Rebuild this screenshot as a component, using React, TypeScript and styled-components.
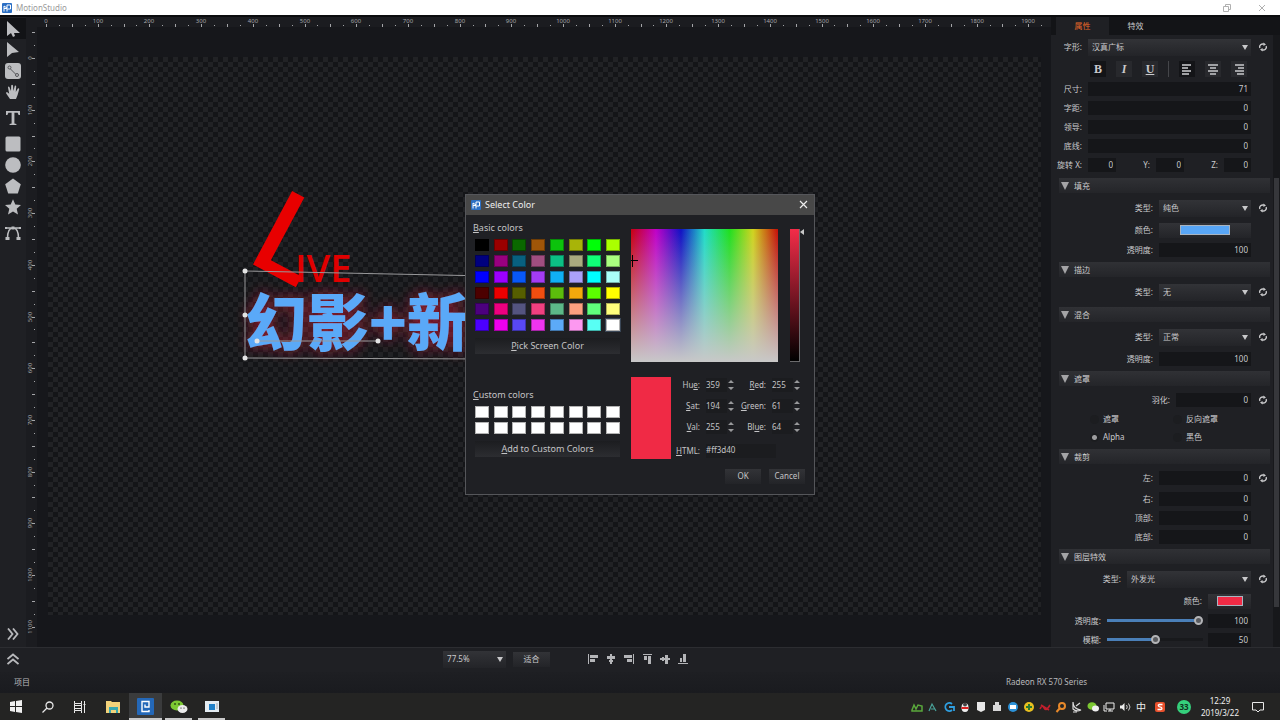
import React from "react";
import styled, { createGlobalStyle, css } from "styled-components";

const GlobalStyle = createGlobalStyle`
  * { box-sizing: border-box; }
  body {
    margin: 0;
    background: #17181c;
    color: #cacacc;
    font-family: "Noto Sans", "Noto Sans CJK SC", sans-serif;
    font-size: 8px;
    line-height: 12px;
  }
  button, input, select { font: inherit; color: inherit; margin: 0; padding: 0; border: 0; }
  button { background: none; }
  svg { display: block; }
`;

/* ---------- shell ---------- */

const Shell = styled.div`
  display: flex;
  flex-direction: column;
  height: 100vh;
  overflow: hidden;
  position: relative;
`;

const TitleBar = styled.header`
  display: flex;
  flex: none;
  align-items: center;
  gap: 4px;
  height: 15px;
  padding: 0 10px 0 2px;
  background: #fff;
  color: #9a9a9a;
`;

const AppTitle = styled.h1`
  margin: 0;
  flex: 1;
  font-size: 8px;
  font-weight: 400;
`;

const WindowButton = styled.button`
  display: grid;
  place-items: center;
  width: 16px;
  height: 14px;
  margin-left: 15px;
`;

const Workspace = styled.div`
  display: flex;
  flex: 1;
  min-height: 0;
  border-top: 2px solid #0b0c0e;
`;

const ToolRail = styled.nav`
  display: flex;
  flex-direction: column;
  width: 26px;
  padding: 1px 0 2px;
  background: #1f2024;
`;

const ToolButton = styled.button<{ $active?: boolean; $gap?: boolean }>`
  display: grid;
  place-items: center;
  height: 21px;
  margin-top: ${(p) => (p.$gap ? 5 : 0)}px;
  background: ${(p) => (p.$active ? "#121316" : "transparent")};
`;

const RailSpacer = styled.div`
  flex: 1;
`;

const Stage = styled.main`
  flex: 1;
  min-width: 0;
  min-height: 0;
  display: grid;
  grid-template-columns: 11px 1fr;
  grid-template-rows: 10px 1fr;
`;

const RulerCorner = styled.div`
  background: #1b1c20;
`;

const RulerTrack = styled.div`
  background: #1b1c20;
  overflow: hidden;
  min-width: 0;
  min-height: 0;
`;

const Canvas = styled.div`
  display: flex;
  min-height: 0;
  padding: 30px 10px 32px 11px;
  background: #16171b;
`;

const Artboard = styled.div`
  flex: 1;
  position: relative;
  background: repeating-conic-gradient(#212225 0 25%, #141518 0 50%) 0 0 / 10px 10px;
`;

const Artwork = styled.svg`
  position: absolute;
  inset: 0;
  width: 100%;
  height: 100%;
`;

/* ---------- property panel ---------- */

const Panel = styled.aside`
  width: 229px;
  display: flex;
  flex-direction: column;
  background: #1f2024;
`;

const TabStrip = styled.div`
  display: flex;
  flex: none;
  height: 18px;
  padding-left: 5px;
  background: #131417;
`;

const Tab = styled.button<{ $active?: boolean }>`
  width: 53px;
  background: ${(p) => (p.$active ? "#1f2024" : "transparent")};
  color: ${(p) => (p.$active ? "#e8692a" : "#cacacc")};
`;

const PanelScroll = styled.div`
  display: flex;
  flex: 1;
  min-height: 0;
  overflow: hidden;
`;

const PanelBody = styled.div`
  flex: 1;
`;

const ScrollTrack = styled.div`
  width: 7px;
  padding-top: 143px;
  background: #17181b;
`;

const ScrollThumb = styled.div`
  width: 5px;
  height: 429px;
  margin-left: 1px;
  background: #36373b;
`;

const Row = styled.div<{ $h: number }>`
  display: flex;
  align-items: center;
  height: ${(p) => p.$h}px;
`;

const RowLabel = styled.label`
  flex: 1;
  text-align: right;
  padding-right: 6px;
  white-space: nowrap;
`;

const ResetCell = styled.div`
  width: 22px;
  display: grid;
  place-items: center;
  padding-left: 2px;
`;

const IconButton = styled.button`
  display: grid;
  place-items: center;
`;

const NumberField = styled.input<{ $w: number }>`
  width: ${(p) => p.$w}px;
  height: 14px;
  padding: 0 3px 1px;
  text-align: right;
  background: #151619;
`;

const raised = css`
  background: linear-gradient(#323337, #232428);
`;

const SelectWrap = styled.span<{ $w: number }>`
  display: grid;
  align-items: center;
  width: ${(p) => p.$w}px;
  height: 17px;
  ${raised}
  & > * { grid-area: 1 / 1; }
`;

const NativeSelect = styled.select`
  appearance: none;
  width: 100%;
  height: 100%;
  padding-left: 4px;
  background: transparent;
`;

const SelectArrow = styled.svg`
  justify-self: end;
  margin-right: 3px;
  pointer-events: none;
`;

const ColorButton = styled.button<{ $w: number }>`
  display: grid;
  place-items: center;
  width: ${(p) => p.$w}px;
  height: 15px;
  ${raised}
`;

const ColorChip = styled.span<{ $w: number; $c: string }>`
  width: ${(p) => p.$w}px;
  height: 10px;
  border: 1px solid #a9b4c0;
  background: ${(p) => p.$c};
`;

const FormatBar = styled.div`
  display: flex;
  align-items: center;
  gap: 10px;
  height: 20px;
  padding-left: 39px;
`;

const FormatButton = styled.button<{ $on?: boolean }>`
  display: grid;
  place-items: center;
  width: 16px;
  height: 16px;
  font-family: "Liberation Serif", serif;
  font-size: 12px;
  font-weight: 700;
  background: ${(p) => (p.$on ? "#131417" : "#28292d")};
`;

const FormatDivider = styled.span`
  width: 1px;
  height: 16px;
  background: #45464a;
`;

const SectionHeader = styled.button`
  display: flex;
  align-items: center;
  gap: 5px;
  width: 211px;
  height: 15px;
  margin: 3px 0 3px 8px;
  padding-left: 2px;
  background: linear-gradient(#303135, #242529);
`;

const AxisLabel = styled.label`
  width: 40px;
  padding-right: 6px;
  text-align: right;
`;

const ChoiceRow = styled.div`
  display: grid;
  grid-template-columns: 83px 1fr;
  align-items: center;
  height: 18px;
  padding-left: 39px;
`;

const Choice = styled.label`
  display: flex;
  align-items: center;
  gap: 4px;
`;

const Radio = styled.input`
  appearance: none;
  width: 9px;
  height: 9px;
  border-radius: 50%;
  background: #1c1d20;
  &:checked { background: radial-gradient(circle, #9c9c9e 0 2px, #1b1c1f 3px); }
`;

const Slider = styled.input<{ $fill: number }>`
  appearance: none;
  width: 96px;
  height: 10px;
  margin-right: 5px;
  background: linear-gradient(90deg, #4a7fb8 ${(p) => p.$fill}%, #18191c 0) center / 100% 3px no-repeat;
  &::-webkit-slider-thumb {
    appearance: none;
    width: 9px;
    height: 9px;
    border: 2px solid #b4b5b8;
    border-radius: 50%;
    background: #5a5b5f;
  }
`;

/* ---------- bottom bars ---------- */

const ViewBar = styled.div`
  display: grid;
  flex: none;
  grid-template-columns: 9fr 17fr;
  align-items: center;
  height: 25px;
  padding-bottom: 2px;
  border-top: 1px solid #2c2d31;
  background: #1f2024;
`;

const ViewControls = styled.div`
  display: flex;
  align-items: center;
`;

const ExpandButton = styled(IconButton)`
  width: 26px;
  height: 22px;
`;

const FitButton = styled.button`
  width: 37px;
  height: 15px;
  margin: 0 34px 0 7px;
  ${raised}
`;

const AlignButton = styled(IconButton)`
  width: 18px;
  height: 16px;
`;

const StatusBar = styled.footer`
  display: flex;
  flex: none;
  justify-content: space-between;
  align-items: center;
  height: 21px;
  padding: 0 193px 1px 14px;
  background: linear-gradient(#1e1f23, #1a1b1f);
  color: #b8b8bb;
`;

const Taskbar = styled.nav`
  display: flex;
  flex: none;
  align-items: stretch;
  height: 27px;
  background: #242423;
`;

const TaskButton = styled.button<{ $active?: boolean; $open?: boolean }>`
  display: grid;
  place-items: center;
  width: 33px;
  background: ${(p) => (p.$active ? "#3a3b3c" : "transparent")};
  position: relative;
  &:nth-child(-n + 3) { width: 32px; }
  &::after {
    content: "";
    display: ${(p) => (p.$open ? "block" : "none")};
    position: absolute;
    left: ${(p) => (p.$active ? 0 : 3)}px;
    right: ${(p) => (p.$active ? 0 : 3)}px;
    bottom: 0;
    height: 2px;
    background: #c9c9c9;
  }
`;

const TaskSpacer = styled.div`
  flex: 1;
`;

const TrayButton = styled.button<{ $wide?: boolean }>`
  display: grid;
  place-items: center;
  width: ${(p) => (p.$wide ? 22 : 16)}px;
  font-size: 10px;
  color: #eee;
`;

const TrayBadge = styled.button`
  align-self: center;
  width: 14px;
  height: 14px;
  margin: 0 6px;
  border-radius: 50%;
  background: #35d07c;
  color: #10331f;
  font-weight: 700;
`;

const Clock = styled.div`
  align-self: center;
  width: 46px;
  text-align: center;
  color: #f0f0f0;
`;

const NoticeButton = styled(IconButton)`
  width: 30px;
  margin-right: 7px;
`;

/* ---------- colour dialog ---------- */

const DialogLayer = styled.div`
  position: absolute;
  inset: 0;
  display: grid;
  place-items: center;
  padding-bottom: 32px;
  pointer-events: none;
`;

const Dialog = styled.section`
  width: 350px;
  border: 1px solid #55565a;
  background: #1f2024;
  color: #c4c4c6;
  pointer-events: auto;
`;

const DialogTitle = styled.header`
  display: flex;
  align-items: center;
  gap: 4px;
  height: 20px;
  padding: 0 6px 0 5px;
  background: #484848;
  color: #eee;
  h2 { margin: 0; flex: 1; font-size: 9px; font-weight: 400; }
`;

const DialogBody = styled.div`
  display: grid;
  grid-template-columns: 147px 1fr;
  column-gap: 11px;
  padding: 7px 9px 10px 7px;
`;

const Palette = styled.div`
  display: flex;
  flex-direction: column;
`;

const GroupLabel = styled.h3<{ $gap?: boolean }>`
  margin: ${(p) => (p.$gap ? 35 : 0)}px 0 5px;
  font-size: 9px;
  font-weight: 400;
  line-height: 12px;
`;

const SwatchGrid = styled.div`
  display: grid;
  grid-template-columns: repeat(8, 14px);
  justify-content: space-between;
  row-gap: 4px;
  margin-left: 2px;
`;

const Swatch = styled.button<{ $c: string; $selected?: boolean }>`
  height: 12px;
  background: ${(p) => p.$c};
  border: 1px solid rgba(0, 0, 0, 0.3);
  outline: ${(p) => (p.$selected ? "1px solid #3a4656" : "none")};
`;

const WideButton = styled.button`
  height: 16px;
  margin: 7px 0 0 2px;
  font-size: 9px;
  background: linear-gradient(#1c1d20, #2c2d31);
`;

const Picker = styled.div`
  padding-top: 7px;
`;

const FieldRow = styled.div`
  display: flex;
  height: 133px;
`;

const SpectrumField = styled.div`
  width: 147px;
  background:
    linear-gradient(rgba(200, 200, 200, 0), #c8c8c8),
    linear-gradient(90deg, #c80010, #c000c8 17%, #1010c4 34%, #20dcc8 50%, #1ee01e 67%, #d0d41e 83%, #c40c08);
`;

const ValueBar = styled.div`
  width: 10px;
  margin-left: 12px;
  border-right: 1px solid #6a6a6c;
  border-bottom: 1px solid #6a6a6c;
  background: linear-gradient(#f32c48, #000);
`;

const Details = styled.div`
  display: flex;
  gap: 4px;
  margin-top: 13px;
`;

const Preview = styled.div`
  width: 40px;
  height: 82px;
  margin-top: 2px;
  background: #f02a45;
`;

const Fields = styled.div`
  flex: 1;
`;

const FieldLine = styled.div<{ $tall?: boolean }>`
  display: flex;
  align-items: center;
  height: ${(p) => (p.$tall ? 26 : 21)}px;
`;

const FieldLabel = styled.label<{ $wide?: boolean }>`
  width: ${(p) => (p.$wide ? 31 : 25)}px;
  text-align: right;
  white-space: nowrap;
`;

const SpinInput = styled.input`
  width: 21px;
  height: 14px;
  margin-left: 6px;
  padding-bottom: 2px;
  background: #1b1c1f;
`;

const HexInput = styled.input`
  width: 70px;
  height: 14px;
  margin-left: 6px;
  padding-bottom: 2px;
  background: #1b1c1f;
`;

const DialogActions = styled.div`
  display: flex;
  justify-content: flex-end;
  gap: 8px;
  margin-top: 5px;
`;

const ActionButton = styled.button`
  width: 36px;
  height: 15px;
  ${raised}
`;

/* ---------- icons ---------- */

const LogoMark = () => (
  <svg width="10" height="10" viewBox="0 0 10 10">
    <rect width="10" height="10" rx="1" fill="#2b6fc4" />
    <path d="M2 8.500V3l3 2V2h3.500v4H5M2 5.500h3v3" fill="none" stroke="#fff" strokeWidth="1" />
  </svg>
);

const ResetIcon = () => (
  <svg width="10" height="10" viewBox="0 0 10 10">
    <path d="M1.800 6A3.200 3 0 0 1 6 2.200M8.200 4A3.200 3 0 0 1 4 7.800" fill="none" stroke="#c8c8ca" strokeWidth="1.400" />
    <path d="M5.400 .6 8 2.400 5.400 4zM4.600 9.400 2 7.600 4.600 6z" fill="#c8c8ca" />
  </svg>
);

const toolIcons: { name: string; gap?: boolean; active?: boolean; art: React.ReactNode }[] = [
  { name: "Select", active: true, art: <path d="M2 0v15l4-3 2 4 2-1-1-3h6z" /> },
  { name: "Direct select", art: <path d="M2 0v15l5-4 7-1z" /> },
  {
    name: "Path",
    art: (
      <>
        <rect x="0" y="0" width="16" height="16" rx="3" />
        <path d="M4 4.500l8 8" stroke="#55565a" fill="none" />
        <circle cx="4.500" cy="4.500" r="1.500" fill="#bcbdc0" stroke="#55565a" />
        <circle cx="12" cy="12" r="1.500" fill="#bcbdc0" stroke="#55565a" />
      </>
    ),
  },
  {
    name: "Hand",
    art: (
      <path d="M5 15 1.200 9.600Q.6 8 2 8l2.200 1.800L3 3.600Q3 2 4.400 3L6 7 6.200 1.600Q7 0 8 1.600L8.400 7l1.400-5.200Q11 .8 11.200 2.400L10.800 8l2-3.600q1.400-.8 1.400.8L12.600 11 11 15z" />
    ),
  },
  {
    name: "Text",
    gap: true,
    art: <path d="M1 1h14v4h-1.400L12.600 2.800H9.400V13.400l2 .6v1H4.600v-1l2-.6V2.800H3.400L2.400 5H1z" />,
  },
  { name: "Rectangle", gap: true, art: <rect x=".5" y=".5" width="15" height="15" rx="1.500" /> },
  { name: "Ellipse", art: <circle cx="8" cy="8" r="7.800" /> },
  { name: "Polygon", art: <path d="M8 .5 15.800 6.300 12.800 15.500H3.200L.2 6.300z" /> },
  { name: "Star", art: <path d="M8 .2l2.300 5.200 5.700.6-4.300 3.800 1.300 5.700L8 12.500 3 15.500l1.300-5.700L0 6l5.700-.6z" /> },
  {
    name: "Pen",
    gap: true,
    art: (
      <>
        <path d="M2.500 13.500C2.500 8 3 3 8 3s5.500 5 5.500 10.500M1 3h14" fill="none" stroke="#bcbdc0" strokeWidth="1.500" />
        <path d="M.5 12h4v3h-4zM11.500 12h4v3h-4zM6.500 1.500h3v3h-3zM0 2h2v2H0zM14 2h2v2h-2z" />
      </>
    ),
  },
];

const alignIcons = [
  { name: "Align left", d: "M1 1h1v10H1zM3 2h8v3H3zM3 6h5v3H3z" },
  { name: "Align centre", d: "M5 1h2v10H5zM2 3h8v3H2zM4 7h4v2H4z" },
  { name: "Align right", d: "M10 1h1v10h-1zM1 2h8v3H1zM4 6h5v3H4z" },
  { name: "Align top", d: "M2 1h9v1H2zM3 3h3v4H3zM7 3h3v8H7z" },
  { name: "Align middle", d: "M1 5h10v2H1zM3 4h2v4H3zM6 2h3v9H6z" },
  { name: "Align bottom", d: "M1 10h10v1H1zM3 5h2v4H3zM6 1h3v8H6z" },
];

/* ---------- rulers ---------- */

const STEP = 51.7;

function HorizontalRuler() {
  const ticks = Array.from({ length: 79 }, (_, i) => i);
  return (
    <svg width="100%" height="10" fill="#a4a5a8" fontSize="6">
      {ticks.map((i) => (
        <rect key={i} x={Math.round(9 + (i * STEP) / 4)} y={i % 2 ? 8 : 7} width="1" height={i % 2 ? 1 : 3} />
      ))}
      {Array.from({ length: 20 }, (_, i) => (
        <text key={i} x={Math.round(9 + i * STEP)} y="6" textAnchor="middle">{i * 100}</text>
      ))}
    </svg>
  );
}

function VerticalRuler() {
  const ticks = Array.from({ length: 47 }, (_, i) => i - 2);
  return (
    <svg width="11" height="100%" fill="#a4a5a8" fontSize="6">
      {ticks.map((i) => (
        <rect key={i} x={i % 2 ? 8 : 6} y={Math.round(31 + (i * STEP) / 4)} width={i % 2 ? 1 : 3} height="1" />
      ))}
      {Array.from({ length: 12 }, (_, i) => (
        <text key={i} transform={`translate(6 ${Math.round(31 + i * STEP)}) rotate(-90)`} textAnchor="middle">{i * 100}</text>
      ))}
    </svg>
  );
}

/* ---------- pieces ---------- */

function Dropdown({ id, w, value, name }: { id: string; w: number; value: string; name?: string }) {
  return (
    <SelectWrap $w={w}>
      <NativeSelect id={id} aria-label={name} defaultValue={value}>
        <option>{value}</option>
      </NativeSelect>
      <SelectArrow width="6" height="5" viewBox="0 0 6 5">
        <path d="M0 0h6L3 5z" fill="#c8c8ca" />
      </SelectArrow>
    </SelectWrap>
  );
}

function Reset({ shown }: { shown?: boolean }) {
  return (
    <ResetCell>
      {shown && (
        <IconButton aria-label="Reset">
          <ResetIcon />
        </IconButton>
      )}
    </ResetCell>
  );
}

function NumberRow({ id, label, value, w, h = 19, reset }: { id: string; label: string; value: string; w: number; h?: number; reset?: boolean }) {
  return (
    <Row $h={h}>
      <RowLabel htmlFor={id}>{label}</RowLabel>
      <NumberField id={id} $w={w} defaultValue={value} />
      <Reset shown={reset} />
    </Row>
  );
}

function SelectRow({ id, label, value, w }: { id: string; label: string; value: string; w: number }) {
  return (
    <Row $h={24}>
      <RowLabel htmlFor={id}>{label}</RowLabel>
      <Dropdown id={id} w={w} value={value} />
      <Reset shown />
    </Row>
  );
}

function ColorRow({ id, label, w, chip, color }: { id: string; label: string; w: number; chip: number; color: string }) {
  return (
    <Row $h={20}>
      <RowLabel htmlFor={id}>{label}</RowLabel>
      <ColorButton id={id} $w={w}>
        <ColorChip $w={chip} $c={color} />
      </ColorButton>
      <Reset />
    </Row>
  );
}

function SliderRow({ id, label, value, fill }: { id: string; label: string; value: string; fill: number }) {
  return (
    <Row $h={19}>
      <RowLabel htmlFor={id}>{label}</RowLabel>
      <Slider id={id} type="range" min="0" max="100" defaultValue={value} $fill={fill} />
      <NumberField aria-label={label} $w={43} defaultValue={value} />
      <Reset />
    </Row>
  );
}

function Section({ title }: { title: string }) {
  return (
    <SectionHeader>
      <svg width="8" height="8" viewBox="0 0 8 8">
        <path d="M0 0h8L4 8z" fill="#a4a4a6" />
      </svg>
      {title}
    </SectionHeader>
  );
}

const basicColors = [
  ["#000000", "#9b0000", "#0a6800", "#a05608", "#0cc30c", "#a8b408", "#00ff08", "#aaff00"],
  ["#00007f", "#98007f", "#08607f", "#a04e80", "#0cbf84", "#aaaa7f", "#10ff78", "#aaff80"],
  ["#0000ff", "#9c00ff", "#0858f8", "#a43cf4", "#10b0f4", "#aaa0f8", "#00ffff", "#aafff8"],
  ["#4c0000", "#ec0000", "#565e00", "#f04e10", "#5cbc0c", "#f4a80c", "#5cff00", "#ffff00"],
  ["#4c007f", "#ec0080", "#545480", "#f04080", "#5cb888", "#fca080", "#60ff7c", "#ffff7c"],
  ["#4c00ff", "#ee00ee", "#5848f4", "#ee34ee", "#5caaf8", "#fc98f0", "#58fff4", "#ffffff"],
];

function SpinField({ id, value, before, mark, after, wide }: { id: string; value: string; before: string; mark: string; after: string; wide?: boolean }) {
  return (
    <>
      <FieldLabel htmlFor={id} $wide={wide}>
        {before}
        <u>{mark}</u>
        {after}
      </FieldLabel>
      <SpinInput id={id} defaultValue={value} />
      <IconButton aria-label={`Step ${before}${mark}${after}`}>
        <svg width="8" height="12" viewBox="0 0 8 12">
          <path d="M1 4h6L4 1zM1 8h6L4 11z" fill="#98999b" />
        </svg>
      </IconButton>
    </>
  );
}

function ColorDialog() {
  return (
    <DialogLayer>
      <Dialog role="dialog" aria-label="Select Color">
        <DialogTitle>
          <LogoMark />
          <h2>Select Color</h2>
          <IconButton aria-label="Close">
            <svg width="9" height="9" viewBox="0 0 9 9">
              <path d="M1 1l7 7M8 1 1 8" stroke="#eee" strokeWidth="1.200" />
            </svg>
          </IconButton>
        </DialogTitle>
        <DialogBody>
          <Palette>
            <GroupLabel><u>B</u>asic colors</GroupLabel>
            <SwatchGrid>
              {basicColors.flat().map((c, i) => (
                <Swatch key={i} $c={c} $selected={i === 47} aria-label={c} />
              ))}
            </SwatchGrid>
            <WideButton><u>P</u>ick Screen Color</WideButton>
            <GroupLabel $gap><u>C</u>ustom colors</GroupLabel>
            <SwatchGrid>
              {Array.from({ length: 16 }, (_, i) => (
                <Swatch key={i} $c="#ffffff" aria-label={`Custom ${i + 1}`} />
              ))}
            </SwatchGrid>
            <WideButton><u>A</u>dd to Custom Colors</WideButton>
          </Palette>
          <Picker>
            <FieldRow>
              <SpectrumField>
                <svg width="10" height="60">
                  <path d="M1.500 26v12M0 31.500h7" stroke="#000" fill="none" />
                </svg>
              </SpectrumField>
              <ValueBar />
              <svg width="5" height="7">
                <path d="M4 0v6L0 3z" fill="#c8c8c8" />
              </svg>
            </FieldRow>
            <Details>
              <Preview />
              <Fields>
                <FieldLine>
                  <SpinField id="hue" before="Hu" mark="e" after=":" value="359" />
                  <SpinField id="red" before="" mark="R" after="ed:" value="255" wide />
                </FieldLine>
                <FieldLine>
                  <SpinField id="sat" before="" mark="S" after="at:" value="194" />
                  <SpinField id="green" before="" mark="G" after="reen:" value="61" wide />
                </FieldLine>
                <FieldLine>
                  <SpinField id="val" before="" mark="V" after="al:" value="255" />
                  <SpinField id="blue" before="Bl" mark="u" after="e:" value="64" wide />
                </FieldLine>
                <FieldLine $tall>
                  <FieldLabel htmlFor="html"><u>H</u>TML:</FieldLabel>
                  <HexInput id="html" defaultValue="#ff3d40" />
                </FieldLine>
              </Fields>
            </Details>
            <DialogActions>
              <ActionButton>OK</ActionButton>
              <ActionButton>Cancel</ActionButton>
            </DialogActions>
          </Picker>
        </DialogBody>
      </Dialog>
    </DialogLayer>
  );
}

const paragraphIcons = [
  "M0 0h9v2H0zM0 3h6v2H0zM0 6h9v2H0zM0 9h7v2H0z",
  "M0 0h10v2H0zM2 3h6v2H2zM0 6h10v2H0zM2 9h6v2H2z",
  "M1 0h9v2H1zM4 3h6v2H4zM1 6h9v2H1zM3 9h7v2H3z",
];

function PropertyPanel() {
  return (
    <Panel>
      <TabStrip>
        <Tab $active>属性</Tab>
        <Tab>特效</Tab>
      </TabStrip>
      <PanelScroll>
        <PanelBody>
          <SelectRow id="font" label="字形:" value="汉真广标" w={163} />
          <FormatBar>
            <FormatButton $on>B</FormatButton>
            <FormatButton><i>I</i></FormatButton>
            <FormatButton><u>U</u></FormatButton>
            <FormatDivider />
            {paragraphIcons.map((d, i) => (
              <FormatButton key={i} $on={i === 0} aria-label={`Paragraph align ${i + 1}`}>
                <svg width="10" height="11"><path d={d} fill="#a0a1a4" /></svg>
              </FormatButton>
            ))}
          </FormatBar>
          <NumberRow id="size" label="尺寸:" value="71" w={163} />
          <NumberRow id="tracking" label="字距:" value="0" w={163} />
          <NumberRow id="leading" label="领导:" value="0" w={163} />
          <NumberRow id="baseline" label="底线:" value="0" w={163} />
          <Row $h={20}>
            <RowLabel htmlFor="rx">旋转 X:</RowLabel>
            <NumberField id="rx" $w={28} defaultValue="0" />
            <AxisLabel htmlFor="ry">Y:</AxisLabel>
            <NumberField id="ry" $w={28} defaultValue="0" />
            <AxisLabel htmlFor="rz">Z:</AxisLabel>
            <NumberField id="rz" $w={27} defaultValue="0" />
            <Reset />
          </Row>

          <Section title="填充" />
          <SelectRow id="fill-type" label="类型:" value="纯色" w={92} />
          <ColorRow id="fill-color" label="颜色:" w={92} chip={50} color="#58a6f6" />
          <NumberRow id="fill-opacity" label="透明度:" value="100" w={92} />

          <Section title="描边" />
          <SelectRow id="stroke-type" label="类型:" value="无" w={92} />

          <Section title="混合" />
          <SelectRow id="blend-type" label="类型:" value="正常" w={92} />
          <NumberRow id="blend-opacity" label="透明度:" value="100" w={92} />

          <Section title="遮罩" />
          <NumberRow id="feather" label="羽化:" value="0" w={75} h={21} reset />
          <ChoiceRow>
            <Choice><Radio type="radio" name="mask" />遮罩</Choice>
            <Choice><Radio type="radio" name="mask" />反向遮罩</Choice>
          </ChoiceRow>
          <ChoiceRow>
            <Choice><Radio type="radio" name="channel" defaultChecked />Alpha</Choice>
            <Choice><Radio type="radio" name="channel" />黑色</Choice>
          </ChoiceRow>

          <Section title="裁剪" />
          <NumberRow id="crop-left" label="左:" value="0" w={92} h={22} reset />
          <NumberRow id="crop-right" label="右:" value="0" w={92} />
          <NumberRow id="crop-top" label="顶部:" value="0" w={92} />
          <NumberRow id="crop-bottom" label="底部:" value="0" w={92} />

          <Section title="图层特效" />
          <SelectRow id="fx-type" label="类型:" value="外发光" w={124} />
          <ColorRow id="fx-color" label="颜色:" w={43} chip={26} color="#f02a45" />
          <SliderRow id="fx-opacity" label="透明度:" value="100" fill={96} />
          <SliderRow id="fx-blur" label="模糊:" value="50" fill={50} />
        </PanelBody>
        <ScrollTrack>
          <ScrollThumb />
        </ScrollTrack>
      </PanelScroll>
    </Panel>
  );
}

const Handle = ({ x, y }: { x: number; y: number }) => <circle cx={x} cy={y} r="2.500" fill="#e4e4e4" />;

function Composition() {
  return (
    <Artwork>
      <defs>
        <filter id="glow" x="-20%" y="-40%" width="140%" height="180%">
          <feDropShadow dx="0" dy="0" stdDeviation="7" floodColor="#e0203a" floodOpacity="0.6" />
        </filter>
      </defs>
      <text x="247" y="225" fontFamily="Open Sans" fontWeight="600" fontSize="38" fill="#e00000">IVE</text>
      <text transform="translate(198 202) rotate(28)" fontFamily="Lato" fontWeight="400" fontSize="112" fill="#e80000" stroke="#e80000" strokeWidth="3">L</text>
      <text x="197" y="289" fontFamily="Noto Sans CJK SC" fontWeight="900" fontSize="62" fill="#5aa9f8" filter="url(#glow)">幻影+新</text>
      <path d="M197 214 440 219M197 214V301L440 302M209 284H329" stroke="#98989a" strokeWidth="1" fill="none" />
      <Handle x={197} y={214} />
      <Handle x={197} y={258} />
      <Handle x={197} y={301} />
      <Handle x={209} y={284} />
      <Handle x={330} y={284} />
    </Artwork>
  );
}

const Chevrons = ({ up }: { up?: boolean }) => (
  <svg width="12" height="12" viewBox="0 0 12 12" fill="none" stroke="#b8b9bc" strokeWidth="1.800">
    <path d={up ? "M.5 6 6 1.500 11.500 6M.5 11 6 6.500 11.500 11" : "M1 .5 5.500 6 1 11.500M6 .5 10.500 6 6 11.500"} />
  </svg>
);

const trayIcons: { name: string; art: React.ReactNode }[] = [
  { name: "GPU", art: <path d="M1 9 3 4l2 4 2-4 4 1v5H1z" fill="none" stroke="#5aa83c" strokeWidth="1.500" /> },
  { name: "Assistant", art: <path d="M2 10 5 3l4 7M4 8h4" fill="none" stroke="#4aa39a" strokeWidth="1.200" /> },
  { name: "Sync", art: <path d="M9 3A4 4 0 1 0 9 9M6 6h5v4" fill="none" stroke="#2f9fe0" strokeWidth="1.800" /> },
  { name: "QQ", art: <><ellipse cx="6" cy="6.500" rx="3.500" ry="4.500" fill="#eee" /><path d="M2.500 6h7v2h-7z" fill="#d22" /><circle cx="6" cy="3.500" r="2" fill="#444" /></> },
  { name: "Device", art: <path d="M2 1h8v8L6 11 2 9z" fill="#e8e8e8" /> },
  { name: "Power", art: <path d="M2 4h8v6H2zM4 1h4v3H4z" fill="#d8d8d8" /> },
  { name: "Mail", art: <><circle cx="6" cy="6" r="5" fill="#2c92d8" /><path d="M3 4h6v4H3z" fill="#fff" /></> },
  { name: "Shield", art: <><circle cx="6" cy="6" r="5" fill="#e8c020" /><path d="M6 3v6M3 6h6" stroke="#2a7a30" strokeWidth="2" /></> },
  { name: "Radio", art: <path d="M1 8q2-5 4-1t6-3M2 4l8 5" fill="none" stroke="#c01f2c" strokeWidth="1.600" /> },
  { name: "Search tool", art: <><circle cx="7" cy="5" r="3" fill="none" stroke="#e8892a" strokeWidth="2" /><path d="M5 7 1.500 11" stroke="#e8892a" strokeWidth="2" /></> },
  { name: "Satellite", art: <path d="M2 1q0 7 8 8-5 2-8-1zM2 11h4M5 5l4-3" fill="none" stroke="#ddd" strokeWidth="1.200" /> },
  { name: "WeChat", art: <><ellipse cx="5" cy="5" rx="4.500" ry="3.800" fill="#7cc832" /><ellipse cx="8.500" cy="7.500" rx="3.500" ry="3" fill="#f0f0f0" /></> },
  { name: "Network", art: <path d="M3 2h8v6H3zM1 4v6h3M5 10h5M7 8v2" fill="none" stroke="#eee" /> },
  { name: "Volume", art: <><path d="M1 4.500h2L5.500 2v8L3 7.500H1z" fill="#eee" /><path d="M7.500 4q1.500 2 0 4M9.500 2.500q3 3.500 0 7" fill="none" stroke="#ccc" /></> },
];

export default function App() {
  return (
    <>
      <GlobalStyle />
      <Shell>
        <TitleBar>
          <LogoMark />
          <AppTitle>MotionStudio</AppTitle>
          <WindowButton aria-label="Restore">
            <svg width="8" height="8"><path d="M.5 2.500h5v5h-5zM2.500 2V.5h5v5H6" fill="none" stroke="#b0b0b0" /></svg>
          </WindowButton>
          <WindowButton aria-label="Close window">
            <svg width="8" height="8"><path d="M1 1l6 6M7 1 1 7" stroke="#b0b0b0" /></svg>
          </WindowButton>
        </TitleBar>

        <Workspace>
          <ToolRail>
            {toolIcons.map((t) => (
              <ToolButton key={t.name} $active={t.active} $gap={t.gap} aria-label={t.name}>
                <svg width="16" height="16" viewBox="0 0 16 16" fill="#bcbdc0">{t.art}</svg>
              </ToolButton>
            ))}
            <RailSpacer />
            <ExpandButton aria-label="Expand tools"><Chevrons /></ExpandButton>
          </ToolRail>
          <Stage>
            <RulerCorner />
            <RulerTrack><HorizontalRuler /></RulerTrack>
            <RulerTrack><VerticalRuler /></RulerTrack>
            <Canvas>
              <Artboard><Composition /></Artboard>
            </Canvas>
          </Stage>
          <PropertyPanel />
        </Workspace>

        <ViewBar>
          <ExpandButton aria-label="Expand timeline"><Chevrons up /></ExpandButton>
          <ViewControls>
            <Dropdown id="zoom" name="Zoom" w={63} value="77.5%" />
            <FitButton>适合</FitButton>
            {alignIcons.map((a) => (
              <AlignButton key={a.name} aria-label={a.name}>
                <svg width="12" height="12"><path d={a.d} fill="#b4b5b8" /></svg>
              </AlignButton>
            ))}
          </ViewControls>
        </ViewBar>
        <StatusBar>
          <span>项目</span>
          <span>Radeon RX 570 Series</span>
        </StatusBar>

        <Taskbar>
          <TaskButton aria-label="Start">
            <svg width="12" height="13" fill="#f0f0f0"><path d="M0 2l5-1v5H0zM6 1l6-1v6H6zM0 7h5v5l-5-1zM6 7h6v6l-6-1z" /></svg>
          </TaskButton>
          <TaskButton aria-label="Search">
            <svg width="12" height="12" fill="none" stroke="#e8e8e8" strokeWidth="1.300"><circle cx="7.500" cy="4.500" r="3.500" /><path d="M5 7 .5 11.500" /></svg>
          </TaskButton>
          <TaskButton aria-label="Task view">
            <svg width="12" height="12" fill="none" stroke="#e8e8e8"><path d="M.5 0v2.500h7V0M.5 12V9.500h7V12M.5 2.500v7M7.500 2.500v7M.5 4.500h7M.5 7.500h7M10.500 0v12M9.500 3.500h2" /></svg>
          </TaskButton>
          <TaskButton aria-label="Files">
            <svg width="16" height="14"><path d="M1 1h5l1 1h8v11H1z" fill="#f2d27a" /><path d="M4 7h9v6h-2V10H6v3H4z" fill="#38a8b0" /></svg>
          </TaskButton>
          <TaskButton $active $open aria-label="MotionStudio">
            <svg width="17" height="17"><rect width="17" height="17" rx="1" fill="#2468b8" /><path d="M5 8V3.500h7V9H8V6.500M5 7v6.500h7V12" fill="none" stroke="#fff" strokeWidth="1.400" /></svg>
          </TaskButton>
          <TaskButton $open aria-label="WeChat">
            <svg width="18" height="14"><ellipse cx="7" cy="5.500" rx="6.500" ry="5" fill="#7cc832" /><circle cx="5" cy="4" r=".8" /><circle cx="9" cy="4" r=".8" /><ellipse cx="12.500" cy="9" rx="5" ry="4" fill="#ececec" /><circle cx="11" cy="8" r=".6" /><circle cx="14" cy="8" r=".6" /></svg>
          </TaskButton>
          <TaskButton $open aria-label="Window">
            <svg width="14" height="12"><rect width="14" height="11" fill="#e4ecf2" /><rect x="4" y="3" width="6" height="6" fill="#2080c8" /><path d="M11 3h2M11 5h2M11 7h2" stroke="#a0a8b0" /></svg>
          </TaskButton>
          <TaskSpacer />
          {trayIcons.map((t) => (
            <TrayButton key={t.name} aria-label={t.name}>
              <svg width="12" height="12" viewBox="0 0 12 12">{t.art}</svg>
            </TrayButton>
          ))}
          <TrayButton>中</TrayButton>
          <TrayButton $wide aria-label="Input method">
            <svg width="10" height="10"><rect width="10" height="10" rx="2" fill="#e8502c" /><path d="M7.500 2.500H4Q2.500 3 4 4.500L6.500 5.500Q7.500 7 6 7.500H2.500" fill="none" stroke="#fff" strokeWidth="1.300" /></svg>
          </TrayButton>
          <TrayBadge>33</TrayBadge>
          <Clock>12:29<br />2019/3/22</Clock>
          <NoticeButton aria-label="Notifications">
            <svg width="12" height="12" fill="none" stroke="#e8e8e8"><path d="M.5 1.500h11v7.500H8L6 11 4 9H.5z" /></svg>
          </NoticeButton>
        </Taskbar>
        <ColorDialog />
      </Shell>
    </>
  );
}
